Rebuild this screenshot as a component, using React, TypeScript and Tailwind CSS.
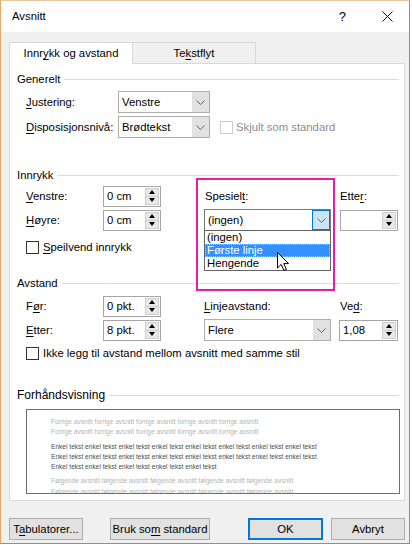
import type { ReactNode } from "react";

// access-key letter
const U = ({ children }: { children: ReactNode }) => (
  <span className="underline underline-offset-[2px] decoration-[1px]">{children}</span>
);

function Group({ title, className }: { title: ReactNode; className: string }) {
  return (
    <div className={`flex h-[16px] items-center pl-[7px] pr-[5px] ${className}`}>
      <span>{title}</span>
      <div className="ml-[4px] h-px flex-1 bg-[#dcdcdc]" />
    </div>
  );
}

function Chevron() {
  return (
    <svg width="9" height="5" viewBox="0 0 9 5" className="block">
      <path d="M0.5 0.5 L4.5 4.5 L8.5 0.5" fill="none" stroke="#606060" strokeWidth="1" />
    </svg>
  );
}

function Combo({ value, className, open }: { value: string; className: string; open?: boolean }) {
  return (
    <div
      className={`flex h-[22px] bg-white border ${open ? "border-[#7a7a7a]" : "border-[#adadad]"} ${className}`}
    >
      <div className="flex flex-1 items-center pl-[3px]">{value}</div>
      {open ? (
        <div className="flex w-[18px] items-center justify-center border border-[#0078d7] bg-[#cce4f7]">
          <Chevron />
        </div>
      ) : (
        <div className="flex w-[17px] items-center justify-center bg-[#e1e1e1]">
          <Chevron />
        </div>
      )}
    </div>
  );
}

function Spin({ value, className }: { value: string; className: string }) {
  return (
    <div className={`flex h-[21px] border border-[#a6a6a6] bg-white ${className}`}>
      <div className="flex flex-1 items-center pl-[3px]">{value}</div>
      <div className="my-[1px] mr-[1px] flex w-[14px] flex-col border border-[#cfcfcf] bg-[#e8e8e8]">
        <div className="flex flex-1 items-center justify-center border-b border-[#cfcfcf]">
          <div className="h-0 w-0 border-x-[3.5px] border-b-[4px] border-x-transparent border-b-black" />
        </div>
        <div className="flex flex-1 items-center justify-center">
          <div className="h-0 w-0 border-x-[3.5px] border-t-[4px] border-x-transparent border-t-black" />
        </div>
      </div>
    </div>
  );
}

function Check({ disabled }: { disabled?: boolean }) {
  return (
    <div
      className={`h-[13px] w-[13px] bg-white border ${disabled ? "border-[#cccccc]" : "border-[#333333]"}`}
    />
  );
}

function Btn({ children, className }: { children: ReactNode; className: string }) {
  return (
    <div className={`flex h-[22px] items-center justify-center bg-[#e1e1e1] ${className}`}>
      <span>{children}</span>
    </div>
  );
}

const previous = "Forrige avsnitt forrige avsnitt forrige avsnitt forrige avsnitt forrige avsnitt";
const sample = "Enkel tekst enkel tekst enkel tekst enkel tekst enkel tekst enkel tekst enkel tekst enkel tekst";
const sampleEnd = "Enkel tekst enkel tekst enkel tekst enkel tekst enkel tekst";
const next = "Følgende avsnitt følgende avsnitt følgende avsnitt følgende avsnitt følgende avsnitt";

export default function App() {
  return (
    <div className="h-[545px] w-[412px] bg-white font-['Liberation_Sans',Arial,sans-serif] text-[11.3px] text-black">
      <div className="flex h-[544px] w-[410px] flex-col border-l border-t border-r border-b border-l-[#e4a76e] border-t-[#e8c4a0] border-r-[#8f8f8f] border-b-[#8f8f8f] bg-[#f0f0f0]">
        {/* title bar */}
        <div className="flex h-[31px] items-center bg-white pl-[11px]">
          <span>Avsnitt</span>
          <span className="ml-auto mr-[36px] text-[13px]">?</span>
          <svg width="11" height="11" viewBox="0 0 11 11" className="mr-[16px]">
            <path d="M0.5 0.5 L10.5 10.5 M10.5 0.5 L0.5 10.5" stroke="#111" strokeWidth="1" />
          </svg>
        </div>

        {/* tabs */}
        <div className="ml-[8px] mt-[9px] flex h-[22px] items-end">
          <div className="relative z-10 -mb-px flex h-[22px] w-[124px] items-center justify-center border border-b-0 border-[#d9d9d9] bg-white">
            <span>
              Innr<U>y</U>kk og avstand
            </span>
          </div>
          <div className="flex h-[21px] w-[123px] items-center justify-center border-r border-t border-[#d9d9d9] bg-[#f0f0f0]">
            <span>
              Te<U>k</U>stflyt
            </span>
          </div>
        </div>

        {/* panel */}
        <div className="relative ml-[8px] flex h-[438px] w-[396px] flex-col border border-[#d9d9d9] bg-white">
          <Group title="Generelt" className="mt-[7px]" />
          <div className="mt-[4px] flex h-[22px] items-center pl-[16px]">
            <span className="w-[92px]">
              <U>J</U>ustering:
            </span>
            <Combo value="Venstre" className="w-[92px]" />
          </div>
          <div className="mt-[3px] flex h-[22px] items-center pl-[16px]">
            <span className="w-[92px]">
              <U>D</U>isposisjonsnivå:
            </span>
            <Combo value="Brødtekst" className="w-[92px]" />
            <div className="ml-[10px]">
              <Check disabled />
            </div>
            <span className="ml-[3px] text-[#8c8c8c]">Skjult som standard</span>
          </div>

          <Group title="Innrykk" className="mt-[29px]" />
          <div className="mt-[2px] flex h-[22px] items-center pl-[16px]">
            <span className="w-[77px]">
              <U>V</U>enstre:
            </span>
            <Spin value="0 cm" className="w-[58px]" />
            <span className="ml-[44px] w-[135px]">
              Spesiel<U>t</U>:
            </span>
            <span>
              Ette<U>r</U>:
            </span>
          </div>
          <div className="mt-[2px] flex h-[22px] items-center pl-[16px]">
            <span className="w-[77px]">
              <U>H</U>øyre:
            </span>
            <Spin value="0 cm" className="w-[58px]" />
            <div className="relative z-20 ml-[43px]">
              <Combo value="(ingen)" className="w-[127px]" open />
              <div className="absolute left-0 top-[21px] w-[127px] border border-[#646464] bg-white">
                <div className="flex h-[13px] items-center pl-[2px]">(ingen)</div>
                <div className="flex h-[13px] items-center border border-dotted border-[#f0c080] bg-[#3390ff] pl-[1px] text-white">
                  Første linje
                </div>
                <div className="flex h-[13px] items-center pl-[2px]">Hengende</div>
                <svg
                  width="13"
                  height="20"
                  viewBox="0 0 13 20"
                  className="absolute left-[72px] top-[21px]"
                >
                  <path
                    d="M0.5 0.5 L0.5 16 L4.2 12.4 L7 18.5 L9.4 17.4 L6.8 11.6 L11.6 11.6 Z"
                    fill="#fff"
                    stroke="#000"
                    strokeWidth="1"
                    strokeLinejoin="round"
                  />
                </svg>
              </div>
            </div>
            <Spin value="" className="ml-[9px] w-[58px]" />
          </div>
          <div className="mt-[8px] flex h-[16px] items-center pl-[16px]">
            <Check />
            <span className="ml-[4px]">
              <U>S</U>peilvend innrykk
            </span>
          </div>

          <Group title="Avstand" className="mt-[20px]" />
          <div className="mt-[4px] flex h-[22px] items-center pl-[16px]">
            <span className="w-[77px]">
              F<U>ø</U>r:
            </span>
            <Spin value="0 pkt." className="w-[58px]" />
            <span className="ml-[43px] w-[136px]">
              <U>L</U>injeavstand:
            </span>
            <span>
              Ve<U>d</U>:
            </span>
          </div>
          <div className="mt-[2px] flex h-[22px] items-center pl-[16px]">
            <span className="w-[77px]">
              <U>E</U>tter:
            </span>
            <Spin value="8 pkt." className="w-[58px]" />
            <Combo value="Flere" className="ml-[43px] w-[127px]" />
            <Spin value="1,08" className="ml-[8px] w-[59px]" />
          </div>
          <div className="mt-[4px] flex h-[16px] items-center pl-[16px]">
            <Check />
            <span className="ml-[4px]">Ikke legg til avstand mellom avsnitt med samme stil</span>
          </div>

          <Group title="Forhåndsvisning" className="mt-[26px] text-[12px]" />
          <div className="ml-[16px] mt-[6px] h-[85px] w-[374px] overflow-hidden border border-[#6e6e6e] bg-white pl-[24px] pt-[7px] text-[6.6px] leading-[10.3px]">
            <div className="text-[#b4b4b4]">{previous}</div>
            <div className="text-[#b4b4b4]">{previous}</div>
            <div className="mt-[4px] text-[#4d4d4d]">{sample}</div>
            <div className="text-[#4d4d4d]">{sample}</div>
            <div className="text-[#4d4d4d]">{sampleEnd}</div>
            <div className="mt-[4px] text-[#b4b4b4]">{next}</div>
            <div className="text-[#b4b4b4]">{next}</div>
          </div>

          {/* highlight frame around the "Spesielt" control */}
          <div className="pointer-events-none absolute left-[186px] top-[114px] h-[113px] w-[139px] border-2 border-[#e81ca8]" />
        </div>

        {/* buttons */}
        <div className="mt-[17px] flex pl-[8px]">
          <Btn className="w-[74px] border border-[#adadad]">
            T<U>a</U>bulatorer...
          </Btn>
          <Btn className="ml-[27px] w-[100px] border border-[#adadad]">
            Bruk so<U>m</U> standard
          </Btn>
          <Btn className="ml-[38px] w-[75px] border-2 border-[#0078d7]">OK</Btn>
          <Btn className="ml-[8px] w-[74px] border border-[#adadad]">Avbryt</Btn>
        </div>
      </div>
    </div>
  );
}
